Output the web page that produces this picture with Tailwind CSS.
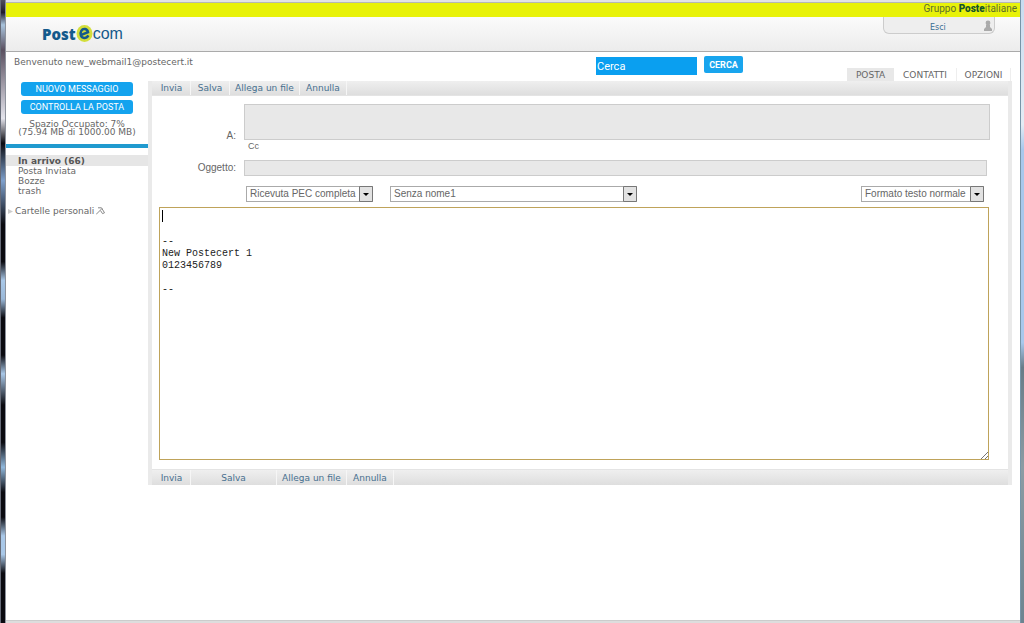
<!DOCTYPE html>
<html lang="it">
<head>
<meta charset="utf-8">
<title>Postecom Webmail</title>
<script src="https://cdn.jsdelivr.net/npm/@tailwindcss/browser@4"></script>
</head>
<body class="flex min-h-screen bg-white font-['DejaVu_Sans',sans-serif] text-[9px] leading-[10px] text-[#666]">
<div class="w-[6px] shrink-0 border-l border-r border-l-[#666b78] border-r-[#8d929c] bg-[linear-gradient(#50505c_0%,#201c2c_2%,#a9c4dd_4%,#5a5060_8%,#e4e4ec_19%,#0a0a10_23%,#7ea0cc_29%,#0a0a10_36%,#0a0a10_42%,#a9c8e8_45%,#9ab8d8_48%,#0a0a10_51%,#0a0a10_57%,#a9c8e8_60%,#0a0a10_65%,#0a0a10_71%,#90b8dc_75%,#0a0a10_79%,#0a0a10_83%,#a9c8e8_86%,#a9c8e8_89%,#0a0a10_92%,#0a0a10_100%)]"></div>

<div class="flex min-w-0 flex-1 flex-col">
  <header>
    <div class="h-[3px] border-b border-[#b5b8b4] bg-[#e2e3e4]"></div>
    <div class="flex h-[14px] items-start justify-end bg-[#e8f209] pr-[3px] font-['Roboto',sans-serif] text-[10px] leading-[12px] text-[#5d6f2c]">
      <span>Gruppo <b class="font-black text-[#14532c]">Poste</b>italiane</span>
    </div>
    <div class="flex h-[35px] items-start justify-between border-b border-[#aaa] bg-linear-to-b from-[#fbfbfb] to-[#ececec] pr-[25px] pl-[36px]">
      <div class="mt-[8px] flex items-center text-[#145a8c]">
        <span class="font-['Open_Sans',sans-serif] text-[15px] leading-[18px] font-extrabold">Post</span>
        <svg class="h-[18px] w-[17px]" viewBox="0 0 17 18" role="img" aria-label="e"><ellipse cx="8.5" cy="8.5" rx="8" ry="8.5" fill="#d3de3a"/><path d="M4.7 10.1L12 7.2C11.4 3.8 7.2 2.7 5.3 5.8C3.6 8.7 4.9 12.8 8.1 13C10.2 13.1 11.6 11.8 12.4 10.4" fill="none" stroke="#145a8c" stroke-width="2.5"/></svg>
        <span class="font-['Liberation_Sans',sans-serif] text-[16px] leading-[18px]">com</span>
      </div>
      <div class="flex h-[17px] w-[112px] items-end rounded-b-md border border-t-0 border-[#ccc] bg-[#eee] pr-[2px] pl-[46px]">
        <a href="#" class="flex-1 text-[8px] leading-[10px] text-[#3b6e94]">Esci</a>
        <svg class="h-[13px] w-[8px]" viewBox="0 0 8 13" fill="#aaa" aria-hidden="true"><circle cx="4" cy="3" r="2.4"/><path d="M2 5h4v2l2 2v2H0V9l2-2z"/></svg>
      </div>
    </div>
  </header>

  <div class="flex h-[29px] items-start pr-[9px] pl-[8px]">
    <p class="mt-[5px] flex-1">Benvenuto new_webmail1@postecert.it</p>
    <form class="mt-[4px] mr-[104px] flex gap-[7px] font-['Roboto',sans-serif]">
      <input aria-label="Cerca" value="Cerca" class="mt-px h-[18px] w-[101px] bg-[#0a9ff0] px-px text-[11px] text-white">
      <button type="button" class="h-[17px] w-[39px] rounded-[2px] bg-[#18a5ee] text-[9px] font-bold text-white">CERCA</button>
    </form>
    <nav class="mt-[16px] flex h-[13px] text-center text-[9px] leading-[14px]">
      <a href="#" class="w-[47px] bg-[#e8e8e8]">POSTA</a>
      <a href="#" class="w-[63px] border-r border-[#eee]">CONTATTI</a>
      <a href="#" class="w-[54px] border-r border-[#eee]">OPZIONI</a>
    </nav>
  </div>

  <main class="flex flex-1 items-start">
    <aside class="w-[142px] shrink-0">
      <div class="mx-[15px] flex flex-col gap-[4px] pt-px font-['Roboto',sans-serif] leading-[12px]">
        <button class="h-[14px] rounded-[3px] bg-[#14a3ee] text-white">NUOVO MESSAGGIO</button>
        <button class="h-[14px] rounded-[3px] bg-[#14a3ee] text-white">CONTROLLA LA POSTA</button>
      </div>
      <p class="mt-[6px] text-center text-[9px] leading-[8px]">Spazio Occupato: 7%<br>(75.94 MB di 1000.00 MB)</p>
      <div class="mt-[8px] h-[4px] bg-[#209acf]"></div>
      <nav class="mt-[7px] flex flex-col text-[9px] leading-[10px]">
        <a href="#" class="bg-[#e6e6e6] pt-px pl-[12px] font-bold text-[#555]">In arrivo (66)</a>
        <a href="#" class="pl-[12px]">Posta Inviata</a>
        <a href="#" class="pl-[12px]">Bozze</a>
        <a href="#" class="pl-[12px]">trash</a>
        <a href="#" class="mt-[10px] flex items-center">
          <svg class="mr-[2px] ml-[2px] h-[5px] w-[5px]" viewBox="0 0 5 5" fill="#ccc" aria-hidden="true"><path d="M0 0l5 2.5L0 5z"/></svg>Cartelle personali
          <svg class="ml-[2px] h-[8px] w-[9px]" viewBox="0 0 9 8" fill="none" stroke="#888" aria-hidden="true"><path d="M0 7.5L6 1.5M2 .8h3.5l3 5-2 .8-2-3"/></svg>
        </a>
      </nav>
    </aside>

    <section class="mr-[8px] min-w-0 flex-1 border-x-4 border-x-[#eaeaea] bg-white">
      <div class="flex h-[15px] border-b border-[#e4e4e4] bg-linear-to-b from-[#efefef] to-[#dedede] pl-px text-center leading-[14px] text-[#47708f]">
        <button class="w-[38px] border-r border-[#f6f6f6]">Invia</button>
        <button class="w-[39px] border-r border-[#f6f6f6]">Salva</button>
        <button class="w-[70px] border-r border-[#f6f6f6]">Allega un file</button>
        <button class="w-[47px] border-r border-[#f6f6f6]">Annulla</button>
      </div>

      <form class="pt-[8px] pb-[9px] pl-[7px] font-['Liberation_Sans',sans-serif] text-[10px] leading-[12px]">
        <div class="flex items-end pr-[18px]">
          <label for="to" class="mb-[-2px] w-[85px] shrink-0 pr-[8px] text-right">A:</label>
          <textarea id="to" class="block h-[36px] min-w-0 flex-1 resize-none border border-[#ccc] bg-[#e8e8e8]"></textarea>
        </div>
        <a href="#" class="ml-[89px] block w-[20px] text-[9px] leading-[12px]">Cc</a>
        <div class="mt-[8px] flex items-center pr-[21px]">
          <label for="subject" class="w-[85px] shrink-0 pr-[8px] text-right">Oggetto:</label>
          <input id="subject" class="h-[16px] min-w-0 flex-1 border border-[#ccc] bg-[#e8e8e8]">
        </div>
        <div class="mt-[10px] flex pr-[24px] pl-[87px]">
          <div class="relative mr-[17px]">
            <select aria-label="Ricevuta" class="block h-[16px] w-[127px] appearance-none border border-[#aaa] bg-white pl-[3px] leading-[14px]"><option>Ricevuta PEC completa</option></select>
            <svg class="pointer-events-none absolute top-0 right-0 h-[16px] w-[14px]" viewBox="0 0 14 16" aria-hidden="true"><path d="M.5.5h13v15H.5z" fill="#e2e2e2" stroke="#777"/><path d="M4 7h6L7 10z"/></svg>
          </div>
          <div class="relative">
            <select aria-label="Firma" class="block h-[16px] w-[247px] appearance-none border border-[#aaa] bg-white pl-[3px] leading-[14px]"><option>Senza nome1</option></select>
            <svg class="pointer-events-none absolute top-0 right-0 h-[16px] w-[14px]" viewBox="0 0 14 16" aria-hidden="true"><path d="M.5.5h13v15H.5z" fill="#e2e2e2" stroke="#777"/><path d="M4 7h6L7 10z"/></svg>
          </div>
          <div class="relative ml-auto">
            <select aria-label="Formato" class="block h-[16px] w-[123px] appearance-none border border-[#aaa] bg-white pl-[3px] leading-[14px]"><option>Formato testo normale</option></select>
            <svg class="pointer-events-none absolute top-0 right-0 h-[16px] w-[14px]" viewBox="0 0 14 16" aria-hidden="true"><path d="M.5.5h13v15H.5z" fill="#e2e2e2" stroke="#777"/><path d="M4 7h6L7 10z"/></svg>
          </div>
        </div>
        <div class="relative mt-[5px] mr-[19px]">
          <textarea aria-label="Messaggio" class="block h-[253px] w-full resize-none border border-[#bfa35a] bg-white px-[2px] pt-[4px] font-['Liberation_Mono',monospace] text-[10px] leading-[12px] text-[#222]">


--
New Postecert 1
0123456789

--</textarea>
          <div class="absolute top-[3px] left-[3px] h-[12px] w-px bg-black"></div>
          <svg class="pointer-events-none absolute right-px bottom-px h-[7px] w-[7px]" viewBox="0 0 7 7" stroke="#777" aria-hidden="true"><path d="M0 7l7-7M4 7l3-3"/></svg>
        </div>
      </form>

      <div class="flex h-[16px] border-t border-[#e4e4e4] bg-linear-to-b from-[#efefef] to-[#dedede] pl-px text-center leading-[14px] text-[#47708f]">
        <button class="w-[38px] border-r border-[#f6f6f6]">Invia</button>
        <button class="w-[86px] border-r border-[#f6f6f6]">Salva</button>
        <button class="w-[70px] border-r border-[#f6f6f6]">Allega un file</button>
        <button class="w-[47px] border-r border-[#f6f6f6]">Annulla</button>
      </div>
    </section>
  </main>
  <footer class="h-[3px] border-t border-[#ccc] bg-[#ddd]"></footer>
</div>
<div class="w-[4px] shrink-0 border-l border-[#7795a8] bg-[linear-gradient(#c8dcf0_0%,#e4ecf4_20%,#a8c8ec_24%,#a8c8ec_55%,#687c88_59%,#8c9ca4_75%,#6c8490_100%)]"></div>
</body>
</html>
